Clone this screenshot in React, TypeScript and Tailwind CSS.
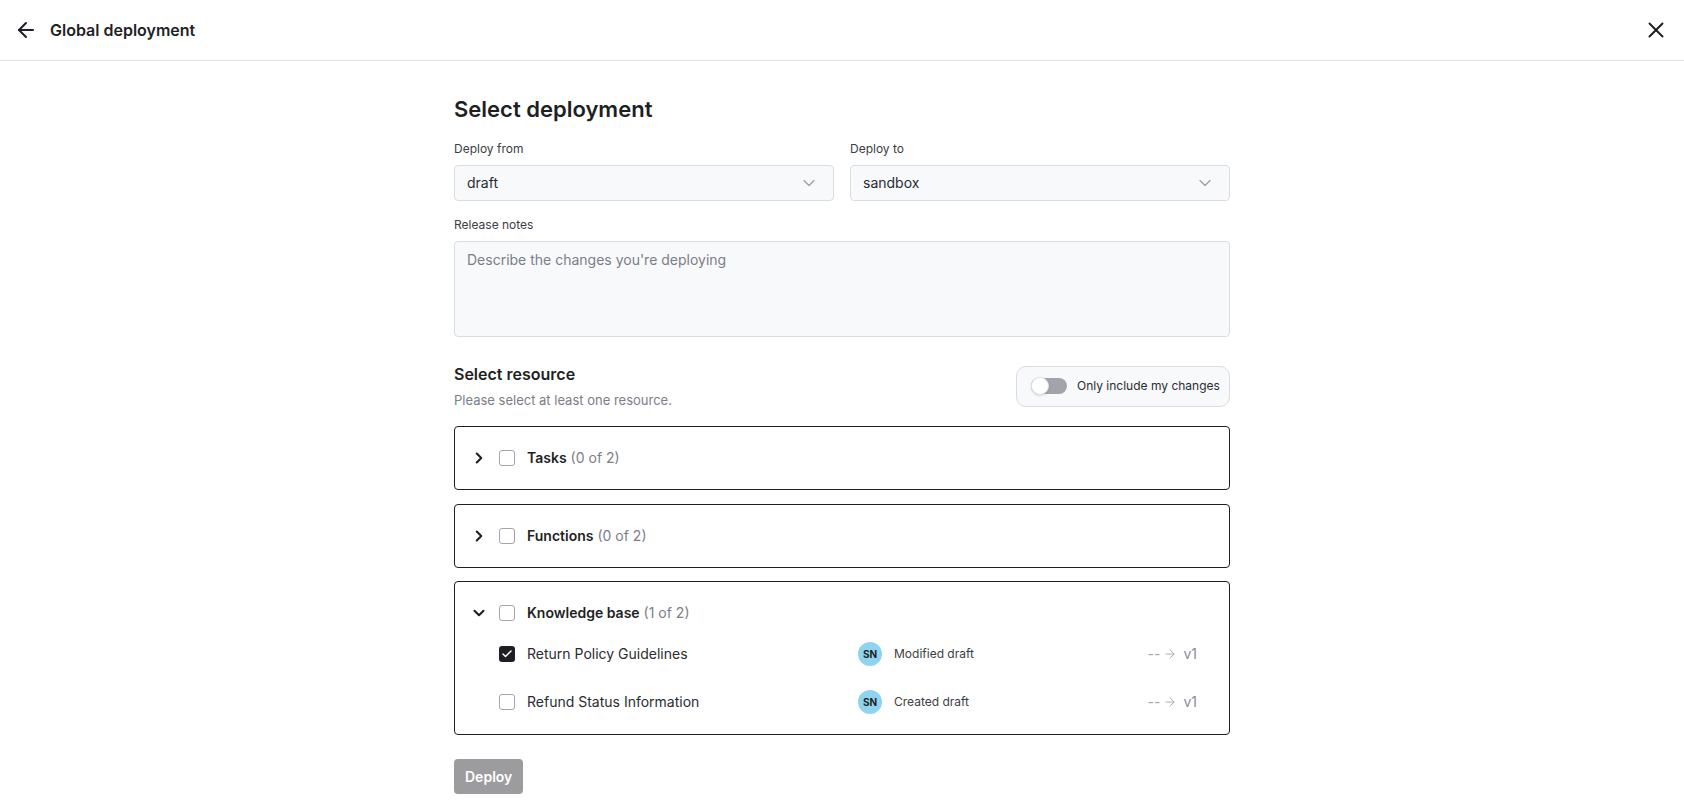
import { ArrowLeft, X, ChevronDown, ChevronRight, Check, ArrowRight } from 'lucide-react';

type Item = { name: string; checked: boolean; author: string; action: string };

const groups: { title: string; count: string; open: boolean; items: Item[] }[] = [
  { title: 'Tasks', count: '(0 of 2)', open: false, items: [] },
  { title: 'Functions', count: '(0 of 2)', open: false, items: [] },
  {
    title: 'Knowledge base',
    count: '(1 of 2)',
    open: true,
    items: [
      { name: 'Return Policy Guidelines', checked: true, author: 'SN', action: 'Modified draft' },
      { name: 'Refund Status Information', checked: false, author: 'SN', action: 'Created draft' },
    ],
  },
];

function Checkbox({ checked }: { checked: boolean }) {
  if (checked) {
    return (
      <span className="flex h-4 w-4 shrink-0 items-center justify-center rounded-[3px] bg-[#1e1f24]">
        <Check size={12} strokeWidth={3} className="text-white" />
      </span>
    );
  }
  return <span className="block h-4 w-4 shrink-0 rounded-[3px] border-[1.5px] border-[#a3a6ae] bg-white" />;
}

function SelectBox({ label, value }: { label: string; value: string }) {
  return (
    <div>
      <div className="mb-2 text-xs leading-4 text-[#3b3d44]">{label}</div>
      <div className="flex h-9 items-center justify-between rounded-[4px] border border-[#dadce1] bg-[#f8f9fb] pl-3 pr-[14px]">
        <span className="text-sm text-[#2a2c31]">{value}</span>
        <ChevronDown size={20} strokeWidth={1.4} className="text-[#9a9ca3]" />
      </div>
    </div>
  );
}

export default function App() {
  return (
    <div className="min-h-screen bg-white font-['Inter',sans-serif] text-[#1e1f24]">
      <header className="flex h-[61px] items-center justify-between border-b border-[#e0e0e5] pl-[14px] pr-[15px]">
        <div className="flex items-center gap-3">
          <ArrowLeft size={24} strokeWidth={2} className="text-[#1e1f24]" />
          <h1 className="text-base font-semibold">Global deployment</h1>
        </div>
        <X size={26} strokeWidth={1.8} className="text-[#1e1f24]" />
      </header>

      <main className="mx-auto w-[776px] pt-8 pb-10">
        <h2 className="text-[22px] leading-8 font-semibold">Select deployment</h2>

        <div className="mt-4 grid grid-cols-2 gap-4">
          <SelectBox label="Deploy from" value="draft" />
          <SelectBox label="Deploy to" value="sandbox" />
        </div>

        <div className="mt-4">
          <div className="mb-2 text-xs leading-4 text-[#3b3d44]">Release notes</div>
          <div className="h-[96px] rounded-[4px] border border-[#dadce1] bg-[#f8f9fb] px-3 pt-[8px] text-sm text-[#7b7e87]">
            Describe the changes you're deploying
          </div>
        </div>

        <div className="mt-[25px] flex items-center justify-between">
          <div>
            <h3 className="text-base leading-6 font-semibold">Select resource</h3>
            <p className="mt-1 text-[13px] leading-5 text-[#7b7e87]">Please select at least one resource.</p>
          </div>
          <div className="flex h-[41px] w-[214px] items-center gap-[10px] rounded-[10px] border border-[#dadce1] bg-[#f8f9fb] pl-[14px]">
            <div className="relative h-4 w-[36px] rounded-full bg-[#a3a4ab]">
              <span className="absolute -top-[1px] left-0 h-[18px] w-[18px] rounded-full border border-[#e3e4e8] bg-white shadow-sm" />
            </div>
            <span className="text-xs text-[#2a2c31]">Only include my changes</span>
          </div>
        </div>

        <div className="mt-4 flex flex-col gap-[13.5px]">
          {groups.map((g) => (
            <div key={g.title} className="rounded-[4px] border border-[#1e1f24] pl-[14px]">
              <div className="flex h-[62px] items-center">
                <span className="flex w-5 justify-center">
                  {g.open ? (
                    <ChevronDown size={18} strokeWidth={2.75} />
                  ) : (
                    <ChevronRight size={18} strokeWidth={2.75} />
                  )}
                </span>
                <span className="ml-[10px]">
                  <Checkbox checked={false} />
                </span>
                <span className="ml-3 text-sm font-semibold">{g.title}</span>
                <span className="ml-1 text-sm text-[#7b7e87]">{g.count}</span>
              </div>
              {g.open && (
                <div className="flex flex-col gap-7 pb-[22px] pl-[30px] pr-[32px]">
                  {g.items.map((it) => (
                    <div key={it.name} className="flex h-5 items-center">
                      <div className="flex w-[359px] items-center gap-3">
                        <Checkbox checked={it.checked} />
                        <span className="text-sm text-[#2a2c31]">{it.name}</span>
                      </div>
                      <div className="flex flex-1 items-center gap-3">
                        <span className="flex h-6 w-6 items-center justify-center rounded-full bg-[#8fd3ef] text-[10px] font-bold text-[#1e1f24]">
                          {it.author}
                        </span>
                        <span className="text-xs text-[#3b3d44]">{it.action}</span>
                      </div>
                      <div className="flex items-center gap-[3px] text-sm text-[#a3a6ae]">
                        <span>--</span>
                        <ArrowRight size={14} strokeWidth={1.5} />
                        <span className="ml-[3px] text-[#8a8d95]">v1</span>
                      </div>
                    </div>
                  ))}
                </div>
              )}
            </div>
          ))}
        </div>

        <button className="mt-6 h-[35px] rounded-[4px] bg-[#9c9c9e] px-[11px] text-sm font-semibold text-white">
          Deploy
        </button>
      </main>
    </div>
  );
}
